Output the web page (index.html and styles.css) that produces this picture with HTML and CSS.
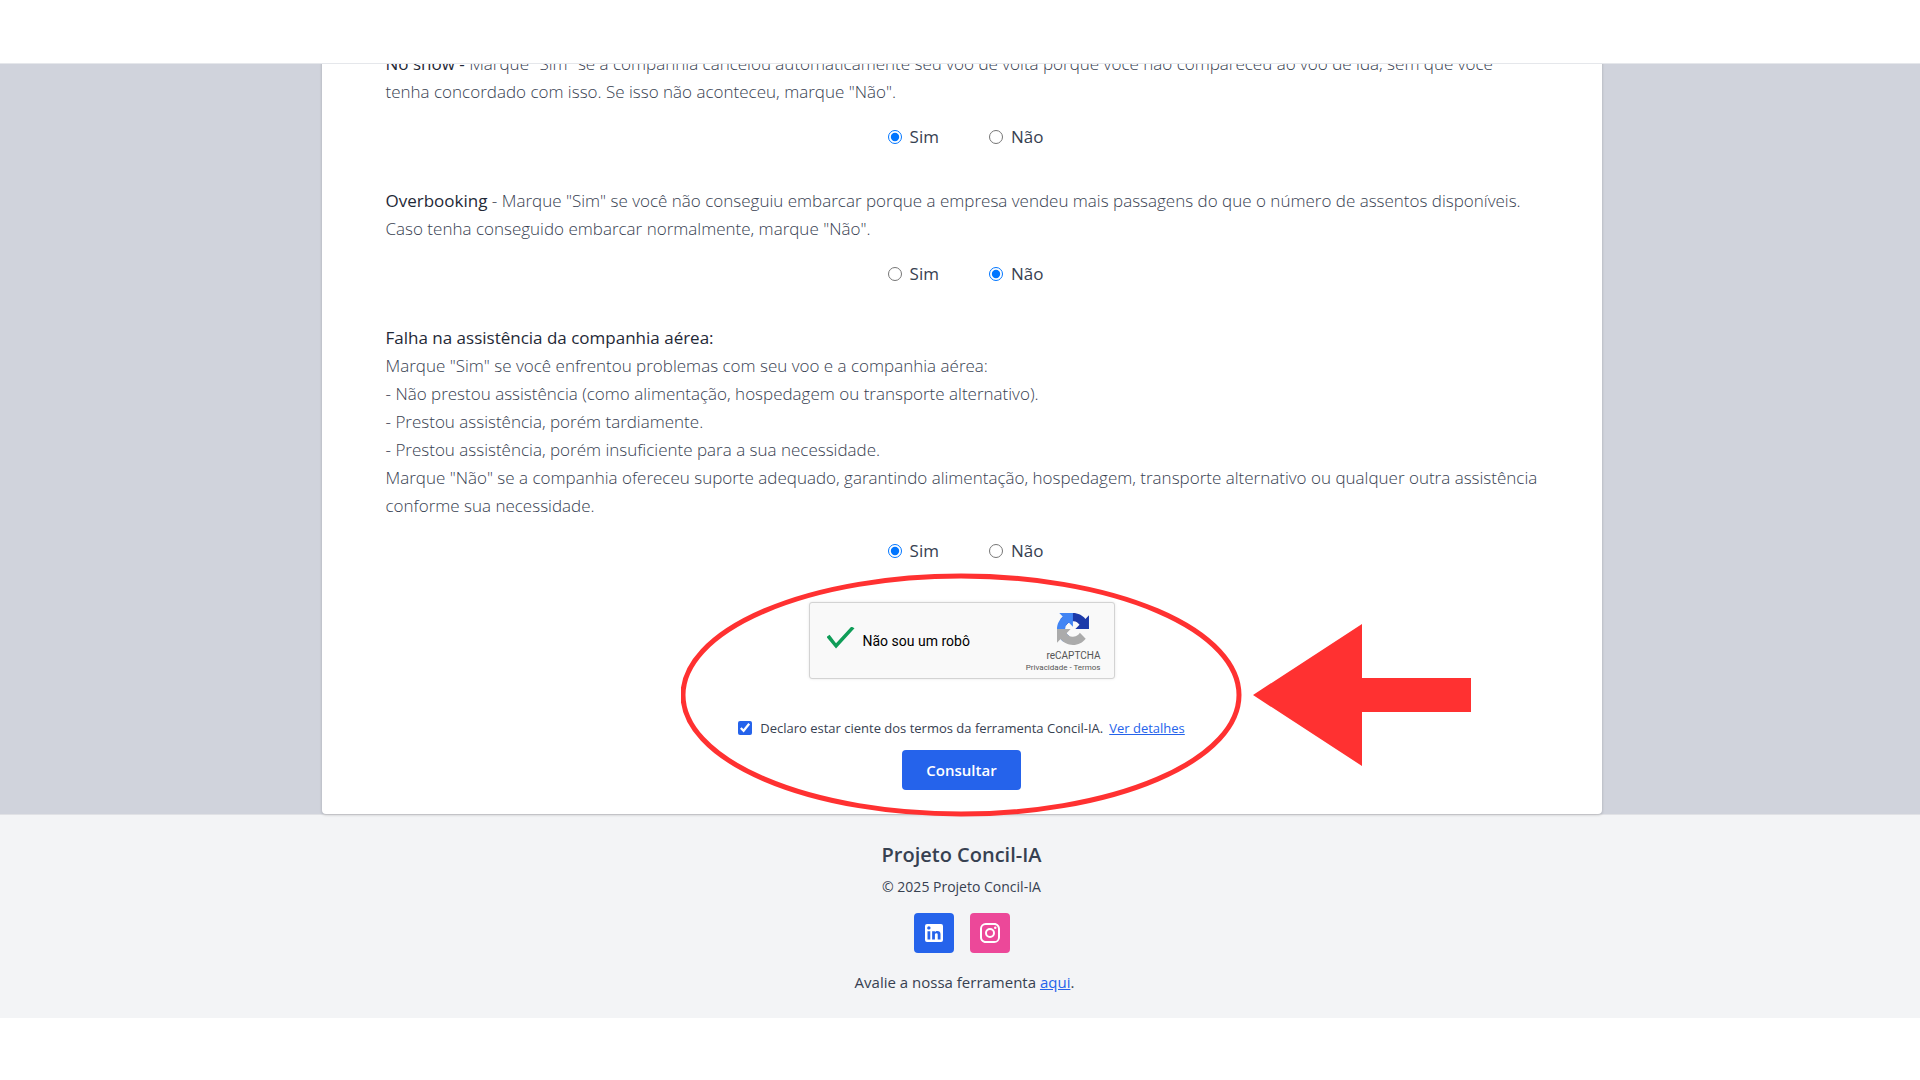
FILE: index.html
```html
<!DOCTYPE html>
<html lang="pt-BR">
<head>
  <meta charset="UTF-8" />
  <meta name="viewport" content="width=device-width, initial-scale=1" />
  <title>Projeto Concil-IA</title>
  <link rel="stylesheet" href="styles.css">
</head>
<body>
  <header class="topbar"></header>

  <main>
    <form class="card">
      <fieldset>
        <p><b>No show -</b> Marque "Sim" se a companhia cancelou automaticamente seu voo de volta porque você não compareceu ao voo de ida, sem que você tenha concordado com isso. Se isso não aconteceu, marque "Não".</p>
        <div class="options">
          <label><input type="radio" name="noshow" value="sim" checked /> Sim</label>
          <label><input type="radio" name="noshow" value="nao" /> Não</label>
        </div>
      </fieldset>

      <fieldset>
        <p><b>Overbooking</b> - Marque "Sim" se você não conseguiu embarcar porque a empresa vendeu mais passagens do que o número de assentos disponíveis. Caso tenha conseguido embarcar normalmente, marque "Não".</p>
        <div class="options">
          <label><input type="radio" name="overbooking" value="sim" /> Sim</label>
          <label><input type="radio" name="overbooking" value="nao" checked /> Não</label>
        </div>
      </fieldset>

      <fieldset>
        <p>
          <b>Falha na assistência da companhia aérea:</b><br>
          Marque "Sim" se você enfrentou problemas com seu voo e a companhia aérea:<br>
          - Não prestou assistência (como alimentação, hospedagem ou transporte alternativo).<br>
          - Prestou assistência, porém tardiamente.<br>
          - Prestou assistência, porém insuficiente para a sua necessidade.<br>
          Marque "Não" se a companhia ofereceu suporte adequado, garantindo alimentação, hospedagem, transporte alternativo ou qualquer outra assistência conforme sua necessidade.
        </p>
        <div class="options">
          <label><input type="radio" name="assistencia" value="sim" checked /> Sim</label>
          <label><input type="radio" name="assistencia" value="nao" /> Não</label>
        </div>
      </fieldset>

      <div class="confirm">
        <div class="captcha">
          <label class="captcha-label"><input type="checkbox" checked /> Não sou um robô</label>
          <div class="captcha-brand">
            <svg viewBox="0 0 64 64" width="32" height="32" aria-hidden="true">
              <path fill="#1c3aa9" d="M64 31.955l-.033-1.37V4.687l-7.16 7.16C50.948 4.674 42.033.093 32.05.093c-10.389 0-19.622 4.96-25.458 12.64l11.736 11.86a15.55 15.55 0 0 1 4.754-5.334c2.05-1.6 4.952-2.906 8.968-2.906.485 0 .86.057 1.135.163 4.976.393 9.288 3.14 11.828 7.124l-8.307 8.307L64 31.953" />
              <path fill="#4285f4" d="M31.862.094l-1.37.033H4.594l7.16 7.16C4.58 13.147 0 22.06 0 32.046c0 10.388 4.96 19.622 12.64 25.458L24.5 45.768a15.55 15.55 0 0 1-5.334-4.754c-1.6-2.05-2.906-4.952-2.906-8.968 0-.485.057-.86.163-1.135.393-4.976 3.14-9.288 7.124-11.828l8.307 8.307L31.86.095" />
              <path fill="#ababab" d="M.001 32.045l.033 1.37v25.898l7.16-7.16c5.86 7.173 14.774 11.754 24.76 11.754 10.388 0 19.622-4.96 25.458-12.64l-11.736-11.86a15.55 15.55 0 0 1-4.754 5.334c-2.05 1.6-4.952 2.906-8.968 2.906-.485 0-.86-.057-1.135-.163-4.976-.393-9.288-3.14-11.828-7.124l8.307-8.307-31.297.002" />
            </svg>
            <span>reCAPTCHA</span>
            <small><a href="#">Privacidade</a> - <a href="#">Termos</a></small>
          </div>
        </div>

        <div class="terms">
          <input type="checkbox" id="termos" checked />
          <label for="termos">Declaro estar ciente dos termos da ferramenta Concil-IA.</label>
          <a href="#">Ver detalhes</a>
        </div>
        <button type="submit">Consultar</button>

        <!-- highlight: circle and arrow -->
        <svg class="highlight" viewBox="0 0 790 244" width="790" height="244" aria-hidden="true">
          <ellipse cx="280" cy="122" rx="278" ry="119" fill="none" stroke="#ff3131" stroke-width="5" />
          <path fill="#ff3131" d="M572 122L681 51V105H790V139H681V193Z" />
        </svg>
      </div>
    </form>
  </main>

  <footer>
    <h2>Projeto Concil-IA</h2>
    <p class="copy">© 2025 Projeto Concil-IA</p>
    <div class="social">
      <a class="linkedin" href="#" aria-label="LinkedIn">
        <svg viewBox="0 0 24 24" width="24" height="24">
          <path fill="#fff" d="M19 3a2 2 0 0 1 2 2v14a2 2 0 0 1-2 2H5a2 2 0 0 1-2-2V5a2 2 0 0 1 2-2h14m-.5 15.500v-5.300a3.260 3.260 0 0 0-3.260-3.260c-.85 0-1.840.52-2.320 1.300v-1.110h-2.790v8.370h2.790v-4.930c0-.77.62-1.400 1.390-1.400a1.400 1.400 0 0 1 1.400 1.400v4.930h2.790M6.880 8.560a1.680 1.680 0 0 0 1.680-1.680c0-.93-.75-1.690-1.680-1.690a1.690 1.690 0 0 0-1.690 1.690c0 .93.76 1.680 1.690 1.680m1.390 9.940v-8.370H5.500v8.370h2.770z" />
        </svg>
      </a>
      <a class="instagram" href="#" aria-label="Instagram">
        <svg viewBox="0 0 24 24" width="24" height="24">
          <path fill="#fff" d="M7.800 2h8.400C19.400 2 22 4.600 22 7.800v8.400a5.800 5.800 0 0 1-5.800 5.800H7.800C4.600 22 2 19.400 2 16.200V7.800A5.800 5.800 0 0 1 7.800 2m-.2 2A3.600 3.600 0 0 0 4 7.600v8.800C4 18.390 5.610 20 7.600 20h8.800a3.600 3.600 0 0 0 3.600-3.600V7.600C20 5.610 18.390 4 16.400 4H7.600m9.650 1.500a1.250 1.250 0 1 1 0 2.500 1.250 1.250 0 0 1 0-2.500M12 7a5 5 0 1 1 0 10 5 5 0 0 1 0-10m0 2a3 3 0 1 0 0 6 3 3 0 0 0 0-6z" />
        </svg>
      </a>
    </div>
    <p class="rate">Avalie a nossa ferramenta <a href="#">aqui</a>.</p>
  </footer>
</body>
</html>
```
FILE: styles.css
```css
* {
  box-sizing: border-box;
}

body {
  margin: 0;
  background: #fff;
  color: #374151;
  font-family: 'Segoe UI', 'Open Sans', 'Noto Sans', sans-serif;
}

p, h2, fieldset {
  margin: 0;
  padding: 0;
  border: none;
}

.topbar {
  position: relative;
  z-index: 1;
  height: 64px;
  background: #fff;
  border-bottom: 1px solid #e5e7eb;
}

main {
  display: flex;
  justify-content: center;
  padding-left: 3px;
  background: #d0d3dc;
}

/* page is scrolled: the first line runs under the top bar */
.card {
  width: 100%;
  max-width: 1280px;
  margin-top: -14px;
  padding: 0 64px 24px;
  background: #fff;
  border-radius: 0 0 4px 4px;
  box-shadow: 0 1px 3px rgba(0, 0, 0, 0.2);
}

fieldset {
  margin-bottom: 35px;
}

fieldset p {
  margin-bottom: 16px;
  font-size: 17px;
  font-weight: 300;
  line-height: 28px;
}

fieldset b {
  font-weight: 400;
  color: #1f2937;
}

.options {
  display: flex;
  justify-content: center;
  gap: 50px;
  padding-left: 8px;
  font-size: 17px;
  line-height: 30px;
}

.options label {
  display: flex;
  align-items: center;
  gap: 8px;
}

.options input {
  width: 14px;
  height: 14px;
  margin: 0;
}

.confirm {
  position: relative;
  display: flex;
  flex-direction: column;
  align-items: center;
  margin-top: 36px;
}

.captcha {
  display: flex;
  justify-content: space-between;
  width: 306px;
  height: 77px;
  margin-bottom: 39px;
  padding: 0 13px 0 17px;
  background: #f9f9f9;
  border: 1px solid #d3d3d3;
  border-radius: 3px;
  box-shadow: 0 0 3px rgba(0, 0, 0, 0.1);
  font-family: Roboto, sans-serif;
}

.captcha-label {
  display: flex;
  align-items: center;
  gap: 8px;
  font-size: 14px;
  color: #000;
}

.captcha-label input {
  appearance: none;
  width: 28px;
  height: 22px;
  margin: 0 0 6px;
  background: #0f9d58;
  clip-path: polygon(0 48%, 11% 37%, 34% 76%, 89% 0, 100% 8%, 34% 100%);
}

.captcha-brand {
  display: flex;
  flex-direction: column;
  align-items: flex-end;
  padding-top: 10px;
  font-size: 10px;
  line-height: 12px;
  color: #555;
}

.captcha-brand svg {
  margin: 0 12px 5px 0;
}

.captcha-brand small {
  font-size: 8px;
}

.captcha-brand a {
  color: #555;
  text-decoration: none;
}

.terms {
  display: flex;
  align-items: center;
  gap: 6px;
  margin-bottom: 12px;
  font-size: 13px;
  line-height: 20px;
}

.terms input {
  width: 14px;
  height: 14px;
  margin: 0 2px 0 0;
  accent-color: #2563eb;
}

.terms a,
.rate a {
  color: #2563eb;
}

button {
  padding: 8px 24px;
  border: none;
  border-radius: 4px;
  background: #2563eb;
  color: #fff;
  font-family: inherit;
  font-size: 15px;
  font-weight: 600;
  line-height: 24px;
  cursor: pointer;
}

/* drawn over the form and the top edge of the footer */
.highlight {
  position: absolute;
  top: -29px;
  left: calc(50% - 281px);
  pointer-events: none;
}

footer {
  display: flex;
  flex-direction: column;
  align-items: center;
  padding: 24px 0 24px 3px;
  background: #f3f4f6;
  border-top: 1px solid #e0e1e5;
}

footer h2 {
  margin-bottom: 6px;
  font-size: 20px;
  font-weight: 600;
  line-height: 32px;
}

.copy {
  margin-bottom: 16px;
  font-size: 14px;
  line-height: 20px;
}

.social {
  display: flex;
  gap: 16px;
  margin-bottom: 17px;
}

.social a {
  display: flex;
  padding: 8px;
  border-radius: 4px;
}

.linkedin {
  background: #2563eb;
}

.instagram {
  background: #ec4899;
}

.rate {
  padding-left: 6px;
  font-size: 15px;
  line-height: 24px;
}
```
